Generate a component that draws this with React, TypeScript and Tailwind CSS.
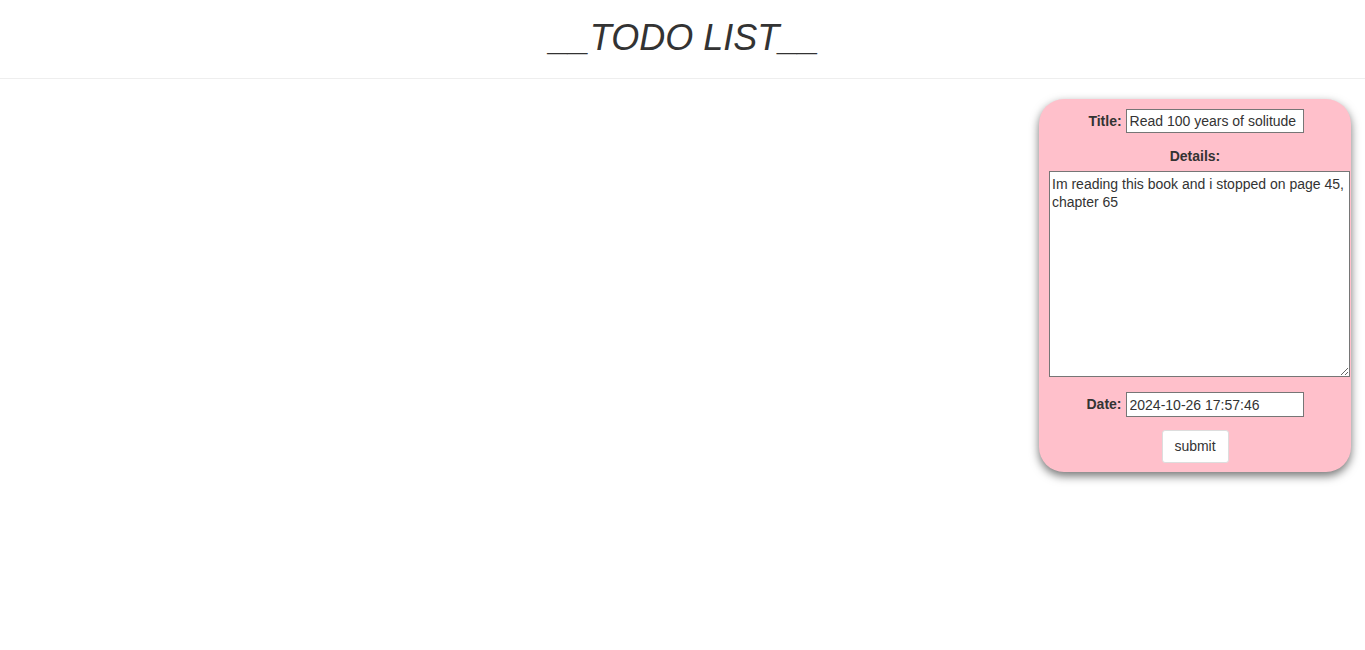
import React from 'react';

const font = { fontFamily: '"Liberation Sans", Arial, sans-serif' };

export default function App() {
  return (
    <div className="min-h-screen bg-white text-[#333]" style={font}>
      {/* Header */}
      <header className="h-[79px] border-b border-[#eee] flex items-center justify-center">
        <h1 className="text-[36px] italic font-normal leading-none pb-[3px] pl-[4px]">__TODO LIST__</h1>
      </header>

      {/* Form card */}
      <main className="flex justify-end pr-[14px] pt-[20px]">
        <form className="w-[312px] bg-[#ffc0cb] rounded-[25px] shadow-[0_4px_10px_rgba(0,0,0,0.55)] flex flex-col items-center pt-[10px] pb-[9px] px-[10px]">
          <div className="flex items-center gap-[4px] pl-[2px]">
            <label className="text-[14px] font-bold">Title:</label>
            <input
              defaultValue="Read 100 years of solitude"
              className="w-[178px] h-[24px] border border-[#767676] bg-white px-[3px] text-[14px] text-[#333] outline-none"
            />
          </div>

          <label className="text-[14px] font-bold mt-[15px] leading-[16px]">Details:</label>
          <textarea
            defaultValue="Im reading this book and i stopped on page 45, chapter 65"
            spellCheck={true}
            className="self-start mt-[7px] w-[301px] h-[206px] border border-[#767676] bg-white px-[2px] pt-[3px] pb-[2px] text-[14px] leading-[18px] text-[#333] outline-none resize"
          />

          <div className="flex items-center gap-[4px] mt-[15px]">
            <label className="text-[14px] font-bold">Date:</label>
            <input
              defaultValue="2024-10-26 17:57:46"
              className="w-[178px] h-[25px] border border-[#767676] bg-white px-[3px] text-[14px] text-[#333] outline-none"
            />
          </div>

          <button
            type="button"
            className="mt-[13px] w-[67px] h-[33px] bg-white border border-[#ddd] rounded-[3px] text-[14px] text-[#333]"
          >
            submit
          </button>
        </form>
      </main>
    </div>
  );
}
